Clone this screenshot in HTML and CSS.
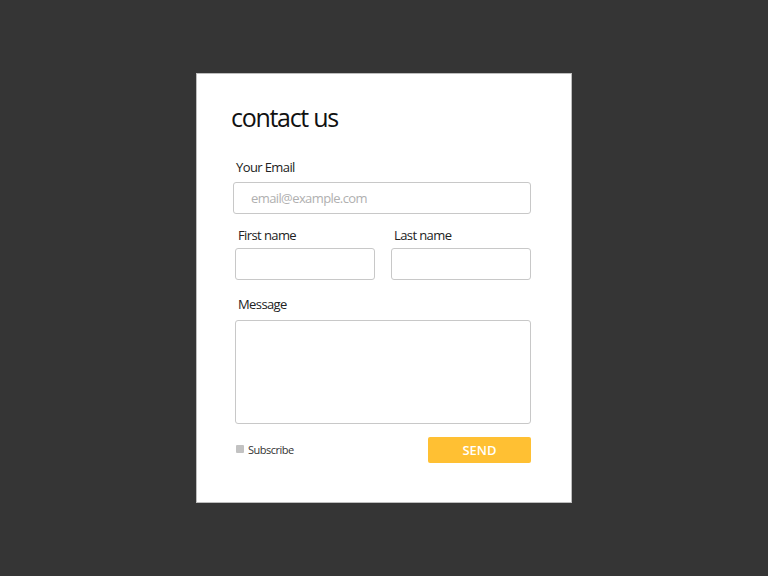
FILE: index.html
```
<!DOCTYPE html>
<html>
<head>
<meta charset="utf-8">
<link rel="stylesheet" href="styles.css">
</head>
<body>
<div class="page">
  <form class="card">
    <h1 class="title">contact us</h1>
    <label class="label label-email">Your Email</label>
    <div class="input input-email"><span class="placeholder">email@example.com</span></div>
    <div class="row">
      <div class="col">
        <label class="label">First name</label>
        <div class="input"></div>
      </div>
      <div class="col">
        <label class="label">Last name</label>
        <div class="input"></div>
      </div>
    </div>
    <div class="block">
      <label class="label">Message</label>
      <div class="textarea"></div>
    </div>
    <div class="actions">
      <div class="check"><span class="box"></span><span class="check-text">Subscribe</span></div>
      <div class="send">SEND</div>
    </div>
  </form>
</div>
</body>
</html>
```
FILE: styles.css
```
* { box-sizing: border-box; }
html, body { margin: 0; padding: 0; }
body {
  background: #353535;
  font-family: "Open Sans", "Noto Sans CJK KR", sans-serif;
  color: #222;
}
.page {
  height: 576px;
  display: flex;
  align-items: center;
  justify-content: center;
}
.card {
  width: 376px;
  height: 430px;
  background: #fff;
  border: 1px solid #bdbdbd;
  padding: 25px 40px 0 36px;
  display: flex;
  flex-direction: column;
}
.title {
  margin: 0 0 0 -2px;
  font-size: 25px;
  font-weight: 400;
  letter-spacing: -1.3px;
  line-height: 37px;
  color: #111;
}
.label {
  display: block;
  font-size: 13px;
  letter-spacing: -0.6px;
  line-height: 18px;
  color: #222;
}
.label-email { margin: 22px 0 0 3px; }
.input {
  height: 32px;
  border: 1px solid #c8c8c8;
  border-radius: 3px;
  background: #fff;
}
.input-email {
  margin-top: 6px;
  display: flex;
  align-items: center;
  padding-left: 17px;
}
.placeholder {
  font-size: 13px;
  color: #b0b0b0;
  letter-spacing: -0.6px;
}
.row {
  display: flex;
  gap: 16px;
  margin: 12px 0 0 2px;
}
.col { flex: 1; }
.col .label { margin: 0 0 4px 3px; }
.block { margin: 15px 0 0 2px; }
.block .label { margin: 0 0 7px 3px; }
.textarea {
  height: 104px;
  border: 1px solid #c8c8c8;
  border-radius: 3px;
}
.actions {
  margin: 13px 0 0 2px;
  display: flex;
  align-items: center;
  justify-content: space-between;
}
.check { display: flex; align-items: center; gap: 4px; margin: -2px 0 0 1px; }
.box {
  width: 8px; height: 8px;
  background: #c2c2c2;
  border-radius: 1px;
}
.check-text {
  font-size: 11px;
  letter-spacing: -0.5px;
  color: #333;
}
.send {
  width: 103px;
  height: 26px;
  background: #ffc033;
  border-radius: 2px;
  color: #fff;
  font-weight: 600;
  font-size: 13px;
  display: flex;
  align-items: center;
  justify-content: center;
}
```
